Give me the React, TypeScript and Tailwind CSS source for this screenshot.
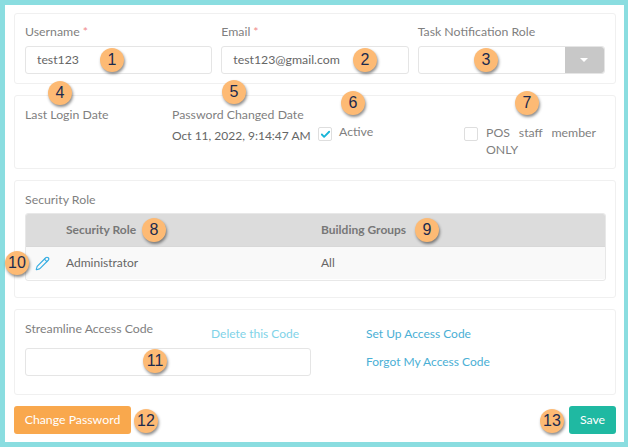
import React from 'react';
import { Check, Pencil } from 'lucide-react';

const Badge = ({ n, pos }: { n: number; pos: string }) => (
  <div
    className={`absolute ${pos} flex h-[24px] w-[24px] items-center justify-center rounded-full bg-[#fdba74] text-[16px] leading-none text-[#1b2a4e] shadow-[1px_2px_3px_rgba(0,0,0,0.45)] font-['Liberation_Sans',sans-serif]`}
  >
    {n}
  </div>
);

const Panel = ({ className, children }: { className: string; children: React.ReactNode }) => (
  <div className={`rounded-[3px] border border-[#f0f0f0] bg-white ${className}`}>{children}</div>
);

const Label = ({ children, required }: { children: React.ReactNode; required?: boolean }) => (
  <div className="h-[19px] text-[12.3px] leading-[19px] text-[#7f7f7f]">
    {children}
    {required && <span className="ml-[3px] text-[#f08a8a]">*</span>}
  </div>
);

const Input = ({ value, className = '' }: { value?: string; className?: string }) => (
  <div className={`flex h-[28px] items-center rounded-[3px] border border-[#e5e5e5] bg-white pl-[11px] text-[12.3px] text-[#666666] ${className}`}>
    {value}
  </div>
);

const Box = ({ checked }: { checked?: boolean }) => (
  <div className="flex h-[14px] w-[14px] shrink-0 items-center justify-center rounded-[2px] border border-[#dedede] bg-white">
    {checked && <Check size={11} strokeWidth={4} className="text-[#19b5d8]" />}
  </div>
);

export default function App() {
  return (
    <div className="relative flex h-[447px] w-[628px] flex-col border-t-[5px] border-r-[4px] border-b-[5px] border-l-[5px] border-[#8adde0] bg-white pt-[8px] pr-[8px] pl-[9px] font-['Lato',sans-serif]">
      {/* Usuario */}
      <Panel className="h-[71px] px-[10px] pt-[8px]">
        <div className="grid grid-cols-3 gap-[9px]">
          <div>
            <Label required>Username</Label>
            <Input value="test123" className="mt-[5px]" />
          </div>
          <div>
            <Label required>Email</Label>
            <Input value="test123@gmail.com" className="mt-[5px]" />
          </div>
          <div>
            <Label>Task Notification Role</Label>
            <div className="mt-[5px] flex h-[28px] rounded-[3px] border border-[#e5e5e5] bg-white">
              <div className="flex-1" />
              <div className="flex w-[39px] items-center justify-center rounded-r-[3px] bg-[#c8c8c8]">
                <div className="h-0 w-0 border-x-[4px] border-t-[4px] border-x-transparent border-t-white" />
              </div>
            </div>
          </div>
        </div>
      </Panel>

      {/* Fechas y opciones */}
      <Panel className="mt-[11px] flex h-[74px] pt-[9px] pl-[10px] text-[12px]">
        <div className="w-[147px]">
          <Label>Last Login Date</Label>
        </div>
        <div className="w-[146px]">
          <Label>Password Changed Date</Label>
          <div className="mt-[2px] leading-[19px] whitespace-nowrap text-[#666666]">Oct 11, 2022, 9:14:47 AM</div>
        </div>
        <div className="flex w-[146px] items-start gap-[7px] pt-[22px]">
          <Box checked />
          <span className="-mt-[5px] text-[12.3px] leading-[19px] text-[#7f7f7f]">Active</span>
        </div>
        <div className="flex items-start gap-[8px] pt-[22px]">
          <Box />
          <div className="-mt-[3px] w-[110px] text-justify text-[12.3px] leading-[17px] text-[#7f7f7f]">POS staff member ONLY</div>
        </div>
      </Panel>

      {/* Roles de seguridad */}
      <Panel className="mt-[11px] h-[118px] px-[10px] pt-[9px]">
        <Label>Security Role</Label>
        <div className="mt-[4px] h-[68px] w-[581px] overflow-hidden rounded-[3px] border border-[#e8e8e8] text-[12px]">
          <div className="flex h-[33px] items-center border-b border-[#d8d8d8] bg-[#dcdcdc] font-bold text-[#777777]">
            <div className="w-[295px] pl-[40px]">Security Role</div>
            <div>Building Groups</div>
          </div>
          <div className="flex h-[32px] items-center bg-[#f9f9f9] text-[#666666]">
            <div className="relative w-[295px] pl-[40px]">
              <Pencil size={15} strokeWidth={1.8} className="absolute top-[2px] left-[9px] text-[#35ade2]" />
              Administrator
            </div>
            <div>All</div>
          </div>
        </div>
      </Panel>

      {/* Código de acceso */}
      <Panel className="mt-[11px] flex h-[86px] pt-[9px] pl-[10px] text-[12px]">
        <div className="w-[286px]">
          <div className="flex h-[29px] items-start">
            <div className="w-[186px]">
              <Label>Streamline Access Code</Label>
            </div>
            <a className="mt-[5px] leading-[19px] whitespace-nowrap text-[#7fd3e8]">Delete this Code</a>
          </div>
          <Input />
        </div>
        <div className="ml-[55px] flex flex-col gap-[9px] pt-[5px] leading-[19px] text-[#4aafd5]">
          <a>Set Up Access Code</a>
          <a>Forgot My Access Code</a>
        </div>
      </Panel>

      {/* Acciones */}
      <div className="mt-[11px] flex justify-between text-[12.3px] text-white">
        <button className="h-[28px] w-[117px] rounded-[3px] bg-[#f9a84d]">Change Password</button>
        <button className="h-[28px] w-[47px] rounded-[3px] bg-[#1fb9a2]">Save</button>
      </div>

      {/* Marcadores numerados */}
      <Badge n={1} pos="left-[95px] top-[43px]" />
      <Badge n={2} pos="left-[348px] top-[43px]" />
      <Badge n={3} pos="left-[469px] top-[43px]" />
      <Badge n={4} pos="left-[43px] top-[76px]" />
      <Badge n={5} pos="left-[217px] top-[75px]" />
      <Badge n={6} pos="left-[336px] top-[86px]" />
      <Badge n={7} pos="left-[510px] top-[86px]" />
      <Badge n={8} pos="left-[137px] top-[213px]" />
      <Badge n={9} pos="left-[410px] top-[213px]" />
      <Badge n={10} pos="left-[0px] top-[246px]" />
      <Badge n={11} pos="left-[138px] top-[344px]" />
      <Badge n={12} pos="left-[129px] top-[404px]" />
      <Badge n={13} pos="left-[535px] top-[404px]" />
    </div>
  );
}
